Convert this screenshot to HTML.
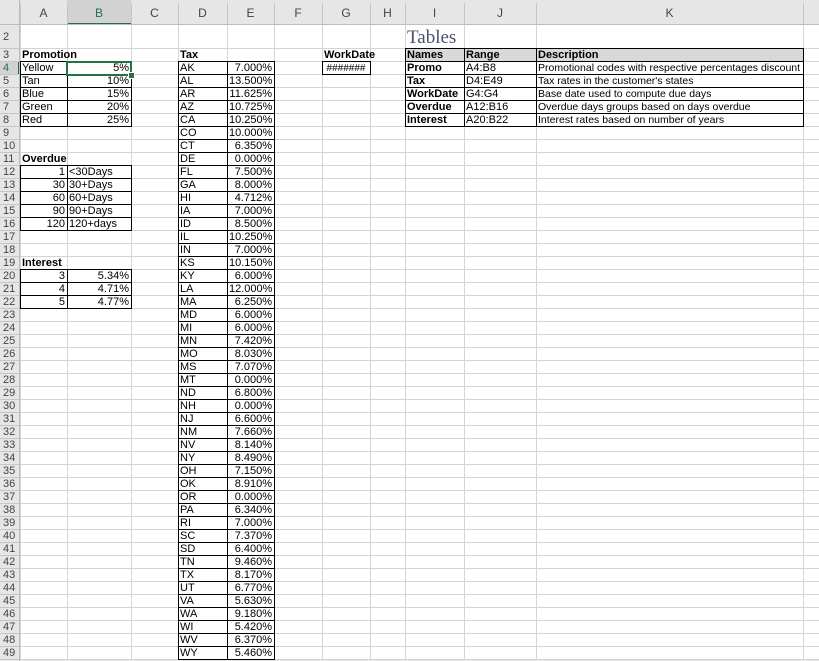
<!DOCTYPE html>
<html><head><meta charset="utf-8">
<style>
html,body{margin:0;padding:0;width:819px;height:661px;overflow:hidden;background:#fff;}
#s{position:relative;width:819px;height:661px;font-family:"Liberation Sans",Arial,sans-serif;font-size:11px;color:#000;}
.l{position:absolute;}
</style></head><body>
<div id="s"></div>
<script>
var S=document.getElementById('s');
var X=[0,20,67,131,178,227,274,322,370,405,464,536,803,819];
function rt(r){return r==2?25:49+(r-3)*13;}
function rb(r){return rt(r+1);}
function ci(c){return "ABCDEFGHIJKL".indexOf(c)+1;}
function box(x,y,w,h,st){var d=document.createElement('div');d.className='l';d.style.cssText+='left:'+x+'px;top:'+y+'px;width:'+w+'px;height:'+h+'px;'+(st||'');S.appendChild(d);return d;}
box(0,0,819,25,'background:#e6e6e6;');
box(0,25,20,636,'background:#e6e6e6;');
box(0,660,819,1,'background:#e6e6e6;');
box(67,0,64,25,'background:#d2d2d2;');
box(67,23,64,2,'background:#217346;');
box(0,62,20,13,'background:#d2d2d2;');
box(18,62,2,13,'background:#217346;');
for(var i=1;i<X.length-1;i++){box(X[i],25,1,635,'background:#d4d4d4;');box(X[i],3,1,22,'background:#c6c6c6;');}
for(var r=2;r<=50;r++){var y=rt(r)-1;if(y>659)break;box(20,y,799,1,'background:#d4d4d4;');box(0,y,20,1,'background:#c6c6c6;');}
box(0,24,819,1,'background:#bdbdbd;');
box(19,0,1,661,'background:#bdbdbd;');
var L="ABCDEFGHIJK";
for(var i=0;i<L.length;i++){var d=box(X[i+1],6,X[i+2]-X[i+1],14,'text-align:center;font-size:12px;color:#444;line-height:14px;');d.textContent=L[i];if(L[i]=='B')d.style.color='#217346';}
for(var r=2;r<=49;r++){var d=box(3,rt(r)+(r==2?6:0),17,13,'font-size:11px;color:#444;line-height:13px;');d.textContent=r;if(r==4)d.style.color='#217346';}
function txt(col,row,s,opt){opt=opt||{};var c=ci(col);var x=X[c],w=(opt.w||X[c+1]-x);
 var d=box(x+2,rt(row),w-4,13,'line-height:13px;white-space:nowrap;'+(opt.a?'text-align:'+opt.a+';':'')+(opt.b?'font-weight:bold;':'')+(opt.st||''));d.textContent=s;return d;}
function outline(c1,r1,c2,r2){for(var c=ci(c1);c<=ci(c2);c++)for(var r=r1;r<=r2;r++){var x=X[c],y=rt(r)-1,w=X[c+1]-x,h=rb(r)-rt(r);
 box(x,y,w+1,h+1,'box-sizing:border-box;border:1px solid #000;');}}
box(405,48,398,14,'background:#d9d9d9;');
outline('A',4,'B',8);outline('A',12,'B',16);outline('A',20,'B',22);outline('D',4,'E',49);outline('G',4,'G',4);outline('I',3,'K',8);
txt('A',3,'Promotion',{b:1});
var pr=[['Yellow','5%'],['Tan','10%'],['Blue','15%'],['Green','20%'],['Red','25%']];
pr.forEach(function(p,i){txt('A',4+i,p[0]);txt('B',4+i,p[1],{a:'right'});});
txt('A',11,'Overdue',{b:1});
[[1,'<30Days'],[30,'30+Days'],[60,'60+Days'],[90,'90+Days'],[120,'120+days']].forEach(function(p,i){txt('A',12+i,p[0],{a:'right'});txt('B',12+i,p[1]);});
txt('A',19,'Interest',{b:1});
[[3,'5.34%'],[4,'4.71%'],[5,'4.77%']].forEach(function(p,i){txt('A',20+i,p[0],{a:'right'});txt('B',20+i,p[1],{a:'right'});});
txt('D',3,'Tax',{b:1});
var tx="AK 7.000,AL 13.500,AR 11.625,AZ 10.725,CA 10.250,CO 10.000,CT 6.350,DE 0.000,FL 7.500,GA 8.000,HI 4.712,IA 7.000,ID 8.500,IL 10.250,IN 7.000,KS 10.150,KY 6.000,LA 12.000,MA 6.250,MD 6.000,MI 6.000,MN 7.420,MO 8.030,MS 7.070,MT 0.000,ND 6.800,NH 0.000,NJ 6.600,NM 7.660,NV 8.140,NY 8.490,OH 7.150,OK 8.910,OR 0.000,PA 6.340,RI 7.000,SC 7.370,SD 6.400,TN 9.460,TX 8.170,UT 6.770,VA 5.630,WA 9.180,WI 5.420,WV 6.370,WY 5.460".split(',');
tx.forEach(function(p,i){var a=p.split(' ');txt('D',4+i,a[0]);txt('E',4+i,a[1]+'%',{a:'right'});});
txt('G',3,'WorkDate',{b:1,a:'center'});
txt('G',4,'#######',{a:'center',st:'font-size:10px;'});
var d=box(407,26,60,22,'font-family:"Liberation Serif",serif;font-size:19px;color:#44546a;line-height:24px;');d.textContent='Tables';
txt('I',3,'Names',{b:1});txt('J',3,'Range',{b:1});txt('K',3,'Description',{b:1});
var tb=[['Promo','A4:B8','Promotional codes with respective percentages discount'],['Tax','D4:E49',"Tax rates in the customer's states"],['WorkDate','G4:G4','Base date used to compute due days'],['Overdue','A12:B16','Overdue days groups based on days overdue'],['Interest','A20:B22','Interest rates based on number of years']];
tb.forEach(function(p,i){txt('I',4+i,p[0],{b:1});txt('J',4+i,p[1]);txt('K',4+i,p[2],{st:'font-size:10.5px;'});});
box(66,61,66,15,'box-sizing:border-box;border:2px solid #217346;');
box(128,72,5,5,'background:#217346;border:1px solid #fff;');
</script>
</body></html>
